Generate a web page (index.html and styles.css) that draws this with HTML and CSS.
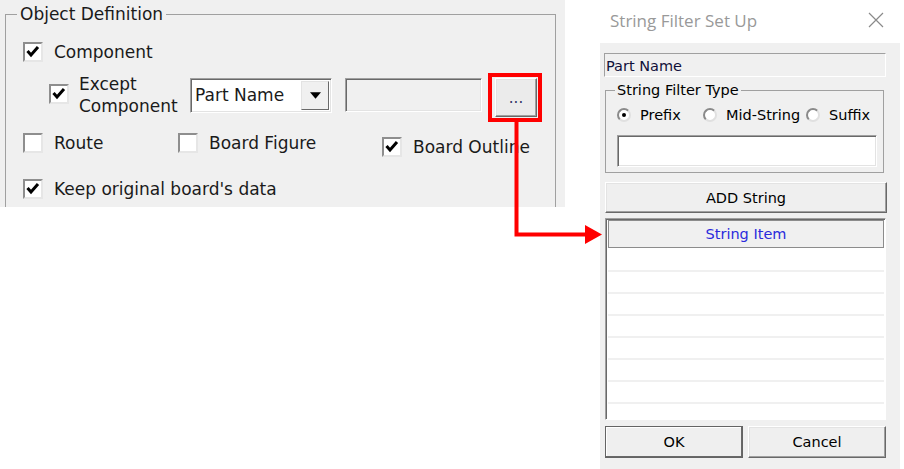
FILE: index.html
```html
<!DOCTYPE html>
<html lang="en">
<head>
  <meta charset="UTF-8" />
  <title>String Filter Set Up</title>
  <link rel="stylesheet" href="styles.css">
</head>
<body>

  <div class="page">

    <!-- Object definition panel -->
    <div class="panel">
      <fieldset class="group">
        <legend>Object Definition</legend>

        <div class="row row-comp">
          <span class="chk on"><svg viewBox="0 0 16 16"><polyline points="2.5,7 6,11 13,3"/></svg></span>
          <span class="lbl">Component</span>
        </div>

        <div class="row row-except">
          <span class="chk on"><svg viewBox="0 0 16 16"><polyline points="2.5,7 6,11 13,3"/></svg></span>
          <span class="lbl two">Except<br>Component</span>
          <div class="combo">
            <span class="combo-text">Part Name</span>
            <span class="combo-btn"><svg viewBox="0 0 10 6"><polygon points="0,0 10,0 5,6"/></svg></span>
          </div>
          <div class="field off"></div>
          <div class="mark">
            <button class="btn dots">...</button>
          </div>
        </div>

        <div class="row row-opts">
          <div class="opt w1">
            <span class="chk"></span>
            <span class="lbl">Route</span>
          </div>
          <div class="opt w2">
            <span class="chk"></span>
            <span class="lbl">Board Figure</span>
          </div>
          <div class="opt low">
            <span class="chk on"><svg viewBox="0 0 16 16"><polyline points="2.5,7 6,11 13,3"/></svg></span>
            <span class="lbl">Board Outline</span>
          </div>
        </div>

        <div class="row row-keep">
          <span class="chk on"><svg viewBox="0 0 16 16"><polyline points="2.5,7 6,11 13,3"/></svg></span>
          <span class="lbl">Keep original board's data</span>
        </div>
      </fieldset>
    </div>

    <!-- String filter dialog -->
    <div class="dialog">
      <div class="titlebar">
        <span class="title">String Filter Set Up</span>
        <svg class="close" viewBox="0 0 16 16"><path d="M1 1 L15 15 M15 1 L1 15"/></svg>
      </div>

      <div class="dlg-body">
        <div class="static">Part Name</div>

        <fieldset class="sub">
          <legend>String Filter Type</legend>
          <div class="radios">
            <div class="radio-item r1"><span class="radio on"></span>Prefix</div>
            <div class="radio-item r2"><span class="radio"></span>Mid-String</div>
            <div class="radio-item"><span class="radio"></span>Suffix</div>
          </div>
          <div class="field text-in"></div>
        </fieldset>

        <button class="btn add">ADD String</button>

        <div class="list">
          <div class="list-head">String Item</div>
          <div class="list-row"></div>
          <div class="list-row"></div>
          <div class="list-row"></div>
          <div class="list-row"></div>
          <div class="list-row"></div>
          <div class="list-row"></div>
          <div class="list-row"></div>
          <div class="list-row"></div>
        </div>

        <div class="actions">
          <button class="btn ok">OK</button>
          <button class="btn">Cancel</button>
        </div>
      </div>
    </div>

  </div>

  <!-- annotation arrow -->
  <svg class="arrow" viewBox="0 0 904 469">
    <path d="M516.5 122 V234.5 H588" />
    <polygon points="585,225 602,234.5 585,244" />
  </svg>

</body>
</html>
```

FILE: styles.css
```css
body {
  margin: 0;
  width: 904px;
  height: 469px;
  overflow: hidden;
  position: relative;
  background: #fff;
  font-family: "DejaVu Sans", sans-serif;
  color: #000;
}
.page {
  display: flex;
  align-items: flex-start;
}

/* left panel */
.panel {
  width: 565px;
  height: 207px;
  box-sizing: border-box;
  padding: 4px 0 0 5px;
  background: #f0f0f0;
  overflow: hidden;
  font-size: 17px;
  color: #1a1a1a;
}
.group {
  margin: 0;
  width: 551px;
  height: 280px;
  box-sizing: border-box;
  border: 1px solid #a0a0a0;
  padding: 0 0 0 17px;
  min-width: 0;
}
.group legend {
  padding: 0 3px;
  margin-left: -6px;
  line-height: 20px;
}
.row {
  display: flex;
  align-items: center;
}
.row-comp {
  height: 22px;
  margin-top: 17px;
}
.row-except {
  align-items: flex-start;
  height: 49px;
  margin-top: 10px;
}
.row-opts {
  align-items: flex-start;
  margin-top: 10px;
}
.row-keep {
  height: 22px;
  margin-top: 20px;
}
.opt {
  display: flex;
  align-items: center;
  height: 22px;
}
.w1 { width: 155px; }
.w2 { width: 204px; }
.low { margin-top: 4px; }

.chk {
  width: 20px;
  height: 20px;
  box-sizing: border-box;
  flex: none;
  background: #fff;
  border: 2px solid;
  border-color: #8e8e8e #e6e6e6 #e6e6e6 #8e8e8e;
}
.chk svg {
  display: block;
  width: 16px;
  height: 16px;
  fill: none;
  stroke: #000;
  stroke-width: 3;
}
.lbl {
  margin-left: 11px;
  white-space: nowrap;
  line-height: 22px;
}
.row-except .chk {
  margin: 11px 0 0 26px;
}
.row-except .lbl {
  margin-left: 10px;
  width: 111px;
}

.combo {
  display: flex;
  width: 142px;
  height: 35px;
  margin-top: 5px;
  box-sizing: border-box;
  background: #fff;
  border: 1px solid;
  border-color: #a0a0a0 #fff #fff #a0a0a0;
  box-shadow: inset 1px 1px #696969, inset -1px -1px #e3e3e3;
  padding: 2px;
}
.combo-text {
  flex: 1;
  line-height: 29px;
  padding-left: 2px;
}
.combo-btn {
  width: 28px;
  box-sizing: border-box;
  background: #f0f0f0;
  border: 1px solid;
  border-color: #e3e3e3 #696969 #696969 #e3e3e3;
  display: flex;
  align-items: center;
  justify-content: center;
}
.combo-btn svg {
  width: 11px;
  height: 7px;
  fill: #000;
}
.field {
  box-sizing: border-box;
  background: #fff;
  border: 1px solid;
  border-color: #a0a0a0 #fff #fff #a0a0a0;
  box-shadow: inset 1px 1px #696969, inset -1px -1px #e3e3e3;
}
.field.off {
  background: #f0f0f0;
  width: 137px;
  height: 34px;
  margin: 5px 0 0 13px;
}
.mark {
  margin-left: 6px;
  border: 4px solid #f00;
  padding: 1px 1px 1px 3px;
}

.btn {
  display: block;
  box-sizing: border-box;
  margin: 0;
  padding: 0;
  font-family: "DejaVu Sans", sans-serif;
  color: #000;
  background: #efefef;
  border: 1px solid;
  border-color: #fff #696969 #696969 #fff;
  box-shadow: inset -1px -1px #a0a0a0, inset 1px 1px #e3e3e3;
}
.dots {
  width: 42px;
  height: 39px;
  font-size: 15px;
  color: #333366;
  background: #ebebeb;
}

/* dialog */
.dialog {
  margin-left: 35px;
  width: 300px;
  font-size: 14.5px;
}
.titlebar {
  height: 43px;
  box-sizing: border-box;
  padding: 0 16px 3px 10px;
  display: flex;
  align-items: center;
  justify-content: space-between;
}
.title {
  font-family: "Open Sans", sans-serif;
  font-size: 17px;
  color: #999;
}
.close {
  width: 16px;
  height: 16px;
  stroke: #8a8a8a;
  stroke-width: 1.2;
}
.dlg-body {
  height: 426px;
  box-sizing: border-box;
  background: #f0f0f0;
  padding: 10px 14px 0 4px;
}
.static {
  height: 24px;
  box-sizing: border-box;
  border: 1px solid;
  border-color: #a0a0a0 #fff #fff #a0a0a0;
  line-height: 24px;
  padding-left: 1px;
  color: #10103a;
}
.sub {
  margin: 4px 2px 0 1px;
  border: 1px solid #a0a0a0;
  padding: 0 0 5px 11px;
  min-width: 0;
}
.sub legend {
  padding: 0 2px;
  margin-left: -2px;
  line-height: 18px;
}
.radios {
  display: flex;
  height: 20px;
  margin-top: 6px;
  align-items: center;
}
.radio-item {
  display: flex;
  align-items: center;
  white-space: nowrap;
}
.r1 { width: 86px; }
.r2 { width: 103px; }
.radio {
  width: 14px;
  height: 14px;
  box-sizing: border-box;
  border-radius: 50%;
  background: #fff;
  border: 2px solid;
  border-color: #8a8a8a #e0e0e0 #e0e0e0 #8a8a8a;
  margin-right: 9px;
  position: relative;
}
.radio.on::after {
  content: "";
  position: absolute;
  left: 3px;
  top: 3px;
  width: 4px;
  height: 4px;
  border-radius: 50%;
  background: #000;
}
.text-in {
  width: 260px;
  height: 32px;
  margin-top: 10px;
}
.add {
  width: 282px;
  height: 31px;
  margin: 9px 0 0 1px;
  font-size: 14.5px;
}
.list {
  width: 281px;
  height: 202px;
  margin: 5px 0 0 1px;
  box-sizing: border-box;
  overflow: hidden;
  background: #fff;
  border: 1px solid;
  border-color: #a0a0a0 #fff #fff #a0a0a0;
  box-shadow: inset 1px 1px #696969;
  padding: 1px 1px 0 2px;
}
.list-head {
  height: 28px;
  box-sizing: border-box;
  border: 1px solid #8c8c8c;
  background: #f0f0f0;
  color: #2b2bdc;
  text-align: center;
  line-height: 27px;
  margin-bottom: 2px;
}
.list-row {
  height: 22px;
  box-sizing: border-box;
  border-bottom: 2px solid #f0f0f0;
}
.actions {
  display: flex;
  gap: 5px;
  margin: 6px 0 0 1px;
}
.actions .btn {
  width: 138px;
  height: 32px;
  font-size: 14.5px;
}
.ok {
  border-color: #646464;
  box-shadow: inset -1px -1px #696969, inset 1px 1px #fff;
}

/* annotation overlay */
.arrow {
  position: absolute;
  left: 0;
  top: 0;
  width: 904px;
  height: 469px;
  pointer-events: none;
}
.arrow path {
  fill: none;
  stroke: #f00;
  stroke-width: 4;
}
.arrow polygon {
  fill: #f00;
}
```
